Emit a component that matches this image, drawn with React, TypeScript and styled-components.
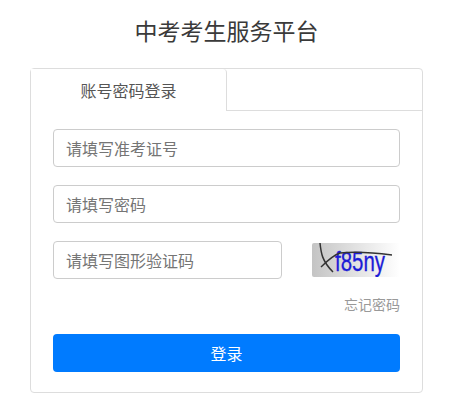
import React from "react";
import styled, { createGlobalStyle } from "styled-components";

const Global = createGlobalStyle`
  html, body { margin: 0; padding: 0; background: #fff; }
  body { font-family: "Liberation Sans", "Noto Sans CJK SC", sans-serif; }
  input::placeholder { color: #757575; opacity: 1; }
`;

const Page = styled.div`
  width: 470px;
  height: 416px;
  padding: 13px 0 0 30px;
  box-sizing: border-box;
  overflow: hidden;
`;

const Title = styled.h1`
  width: 393px;
  margin: 0 0 21px;
  height: 34px;
  line-height: 34px;
  font-size: 23px;
  font-weight: 400;
  color: #3a3a3a;
  text-align: center;
  font-family: "Noto Sans CJK SC", sans-serif;
`;

const Card = styled.div`
  width: 393px;
  height: 325px;
  box-sizing: border-box;
  border: 1px solid #ddd;
  border-radius: 4px;
`;

const TabBar = styled.div`
  height: 42px;
  border-bottom: 1px solid #ddd;
  box-sizing: border-box;
  display: flex;
`;

const Tab = styled.div`
  width: 196px;
  height: 42px;
  box-sizing: border-box;
  background: #fff;
  border-right: 1px solid #ddd;
  border-top-right-radius: 4px;
  font-size: 16px;
  line-height: 42px;
  color: #555;
  text-align: center;
  font-family: "Noto Sans CJK SC", sans-serif;
`;

const Form = styled.form`
  padding: 18px 22px 0;
  display: flex;
  flex-direction: column;
`;

const Row = styled.div`
  display: flex;
  justify-content: space-between;
  align-items: center;
  margin-bottom: 18px;
`;

const Input = styled.input<{ $width?: number }>`
  width: ${(p) => p.$width ?? 347}px;
  height: 38px;
  box-sizing: border-box;
  border: 1px solid #ccc;
  border-radius: 4px;
  padding: 0 13px 0 12px;
  font-size: 16px;
  font-family: "Noto Sans CJK SC", sans-serif;
  color: #555;
  background: #fff;
  outline: none;
`;

const Captcha = styled.svg`
  display: block;
  width: 88px;
  height: 34px;
`;

const Forgot = styled.a`
  align-self: flex-end;
  margin-top: -3px;
  height: 20px;
  line-height: 20px;
  font-size: 14px;
  color: #999;
  font-family: "Noto Sans CJK SC", sans-serif;
`;

const Submit = styled.button`
  margin-top: 20px;
  height: 38px;
  border: none;
  border-radius: 4px;
  background: #007bff;
  color: #fff;
  font-size: 16px;
  font-family: "Noto Sans CJK SC", sans-serif;
  padding: 0;
`;

export default function App() {
  return (
    <Page>
      <Global />
      <Title>中考考生服务平台</Title>
      <Card>
        <TabBar>
          <Tab>账号密码登录</Tab>
        </TabBar>
        <Form onSubmit={(e) => e.preventDefault()}>
          <Row>
            <Input placeholder="请填写准考证号" />
          </Row>
          <Row>
            <Input type="password" placeholder="请填写密码" />
          </Row>
          <Row>
            <Input $width={229} placeholder="请填写图形验证码" />
            <Captcha viewBox="0 0 88 34" aria-label="验证码">
              <defs>
                <linearGradient id="captchaBg" x1="0" y1="0" x2="1" y2="0">
                  <stop offset="0" stopColor="#c4c4c4" />
                  <stop offset="0.5" stopColor="#e2e2e2" />
                  <stop offset="1" stopColor="#ffffff" />
                </linearGradient>
              </defs>
              <rect x="0" y="0" width="88" height="34" rx="2" fill="url(#captchaBg)" />
              <text
                x="23"
                y="28"
                fontFamily="Liberation Sans, sans-serif"
                fontSize="27"
                fill="#1c1cd6"
                stroke="#1c1cd6"
                strokeWidth="0.3"
                textLength="50"
                lengthAdjust="spacingAndGlyphs"
              >
                f85ny
              </text>
              <path d="M8 0 C9 10 10 18 21 29" stroke="#333" strokeWidth="1.5" fill="none" />
              <path d="M9 24 C15 18 22 12 28 10 C45 8 65 10 80 12" stroke="#333" strokeWidth="1.4" fill="none" />
            </Captcha>
          </Row>
          <Forgot>忘记密码</Forgot>
          <Submit type="button">登录</Submit>
        </Form>
      </Card>
    </Page>
  );
}
